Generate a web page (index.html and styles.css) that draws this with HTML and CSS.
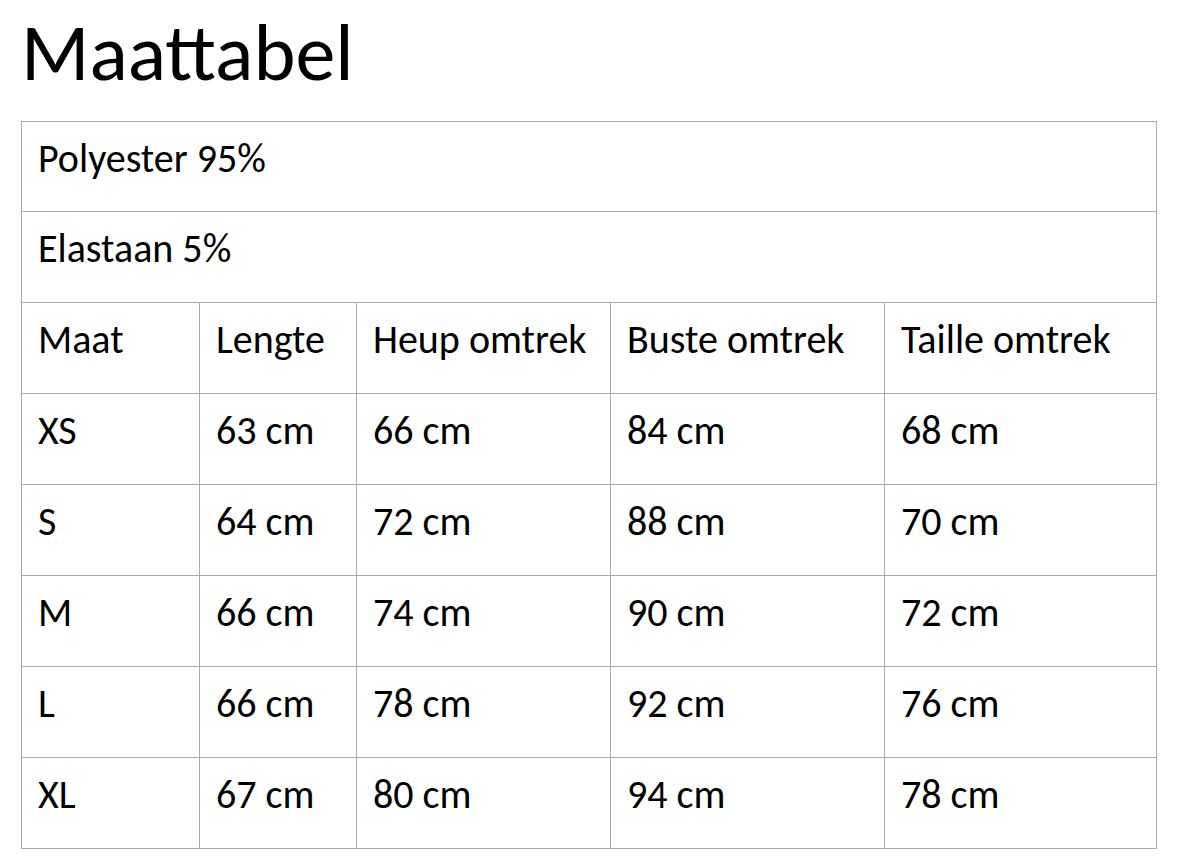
FILE: index.html
```html
<!DOCTYPE html>
<html lang="nl">
<head>
<meta charset="utf-8">
<title>Maattabel</title>
<link rel="stylesheet" href="styles.css">
</head>
<body>
<h1 class="title">Maattabel</h1>
<table class="size-table">
  <colgroup>
    <col class="c1"><col class="c2"><col class="c3"><col class="c4"><col class="c5">
  </colgroup>
  <tbody>
    <tr class="first"><td colspan="5">Polyester 95%</td></tr>
    <tr><td colspan="5">Elastaan 5%</td></tr>
    <tr><td>Maat</td><td>Lengte</td><td>Heup omtrek</td><td>Buste omtrek</td><td>Taille omtrek</td></tr>
    <tr><td>XS</td><td>63 cm</td><td>66 cm</td><td>84 cm</td><td>68 cm</td></tr>
    <tr><td>S</td><td>64 cm</td><td>72 cm</td><td>88 cm</td><td>70 cm</td></tr>
    <tr><td>M</td><td>66 cm</td><td>74 cm</td><td>90 cm</td><td>72 cm</td></tr>
    <tr><td>L</td><td>66 cm</td><td>78 cm</td><td>92 cm</td><td>76 cm</td></tr>
    <tr><td>XL</td><td>67 cm</td><td>80 cm</td><td>94 cm</td><td>78 cm</td></tr>
  </tbody>
</table>
</body>
</html>
```
FILE: styles.css
```css
html, body {
  margin: 0;
  padding: 0;
  background: #ffffff;
}
body {
  padding: 0 0 0 21px;
  font-family: Calibri, Carlito, "Open Sans", Lato, sans-serif;
  color: #000000;
}
.title {
  margin: 0;
  padding-top: 13px;
  font-size: 80px;
  font-weight: 400;
  line-height: 80px;
  box-sizing: border-box;
  height: 121px;
}
.size-table {
  border-collapse: collapse;
  table-layout: fixed;
  width: 1135px;
}
.c1 { width: 178px; }
.c2 { width: 157px; }
.c3 { width: 254px; }
.c4 { width: 274px; }
.c5 { width: 272px; }
.size-table td {
  border: 1px solid #aaaaaa;
  height: 91px;
  box-sizing: border-box;
  padding: 17px 0 0 16px;
  vertical-align: top;
  font-size: 40px;
  line-height: 40px;
  white-space: nowrap;
}
.size-table .first td {
  height: 90px;
}
```
